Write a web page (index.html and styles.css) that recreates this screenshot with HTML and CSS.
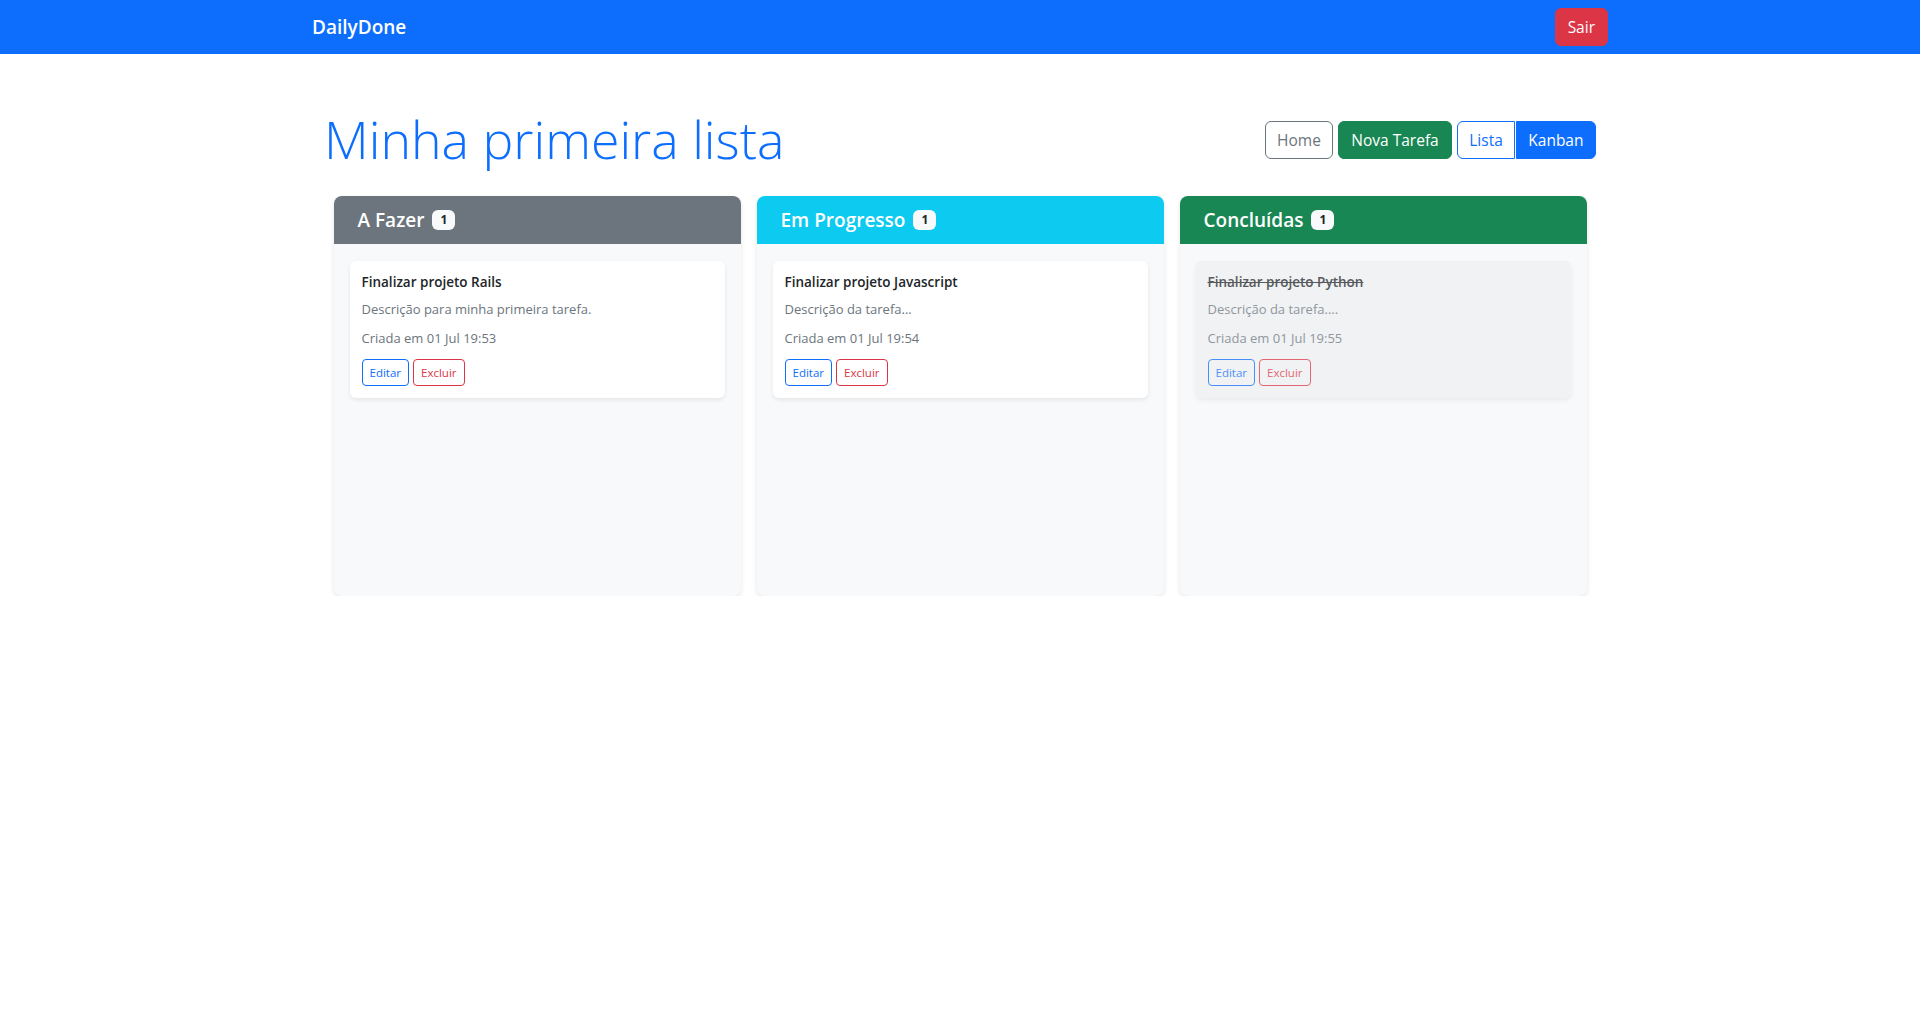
FILE: index.html
```html
<!DOCTYPE html>
<html lang="pt-BR">
<head>
<meta charset="utf-8">
<title>DailyDone</title>
<link rel="stylesheet" href="styles.css">
</head>
<body>
<nav class="navbar">
  <div class="nav-inner">
    <a class="brand" href="#">DailyDone</a>
    <button class="btn btn-danger">Sair</button>
  </div>
</nav>
<main class="page">
  <div class="page-header">
    <h1 class="page-title">Minha primeira lista</h1>
    <div class="actions">
      <a class="btn btn-outline-secondary" href="#">Home</a>
      <a class="btn btn-success" href="#">Nova Tarefa</a>
      <div class="btn-group">
        <a class="btn btn-outline-primary" href="#">Lista</a>
        <a class="btn btn-primary" href="#">Kanban</a>
      </div>
    </div>
  </div>
  <div class="board">
    <section class="column">
      <header class="column-header bg-secondary">
        <h5 class="column-title">A Fazer</h5><span class="badge">1</span>
      </header>
      <div class="column-body">
        <article class="task">
          <h6 class="task-title">Finalizar projeto Rails</h6>
          <p class="task-text">Descrição para minha primeira tarefa.</p>
          <p class="task-text task-date">Criada em 01 Jul 19:53</p>
          <div class="task-actions">
            <a class="btn-xs btn-xs-primary" href="#">Editar</a>
            <a class="btn-xs btn-xs-danger" href="#">Excluir</a>
          </div>
        </article>
      </div>
    </section>
    <section class="column">
      <header class="column-header bg-info">
        <h5 class="column-title">Em Progresso</h5><span class="badge">1</span>
      </header>
      <div class="column-body">
        <article class="task">
          <h6 class="task-title">Finalizar projeto Javascript</h6>
          <p class="task-text">Descrição da tarefa...</p>
          <p class="task-text task-date">Criada em 01 Jul 19:54</p>
          <div class="task-actions">
            <a class="btn-xs btn-xs-primary" href="#">Editar</a>
            <a class="btn-xs btn-xs-danger" href="#">Excluir</a>
          </div>
        </article>
      </div>
    </section>
    <section class="column">
      <header class="column-header bg-success">
        <h5 class="column-title">Concluídas</h5><span class="badge">1</span>
      </header>
      <div class="column-body">
        <article class="task task-done">
          <h6 class="task-title">Finalizar projeto Python</h6>
          <p class="task-text">Descrição da tarefa....</p>
          <p class="task-text task-date">Criada em 01 Jul 19:55</p>
          <div class="task-actions">
            <a class="btn-xs btn-xs-primary" href="#">Editar</a>
            <a class="btn-xs btn-xs-danger" href="#">Excluir</a>
          </div>
        </article>
      </div>
    </section>
  </div>
</main>
</body>
</html>
```

FILE: styles.css
```css
* { box-sizing: border-box; }

body {
  margin: 0;
  font-family: "Open Sans", "Noto Sans", sans-serif;
  font-size: 16px;
  line-height: 1.5;
  color: #212529;
  background: #fff;
}

a { text-decoration: none; }

.navbar {
  background: #0d6efd;
}

.nav-inner {
  max-width: 1296px;
  margin: 0 auto;
  padding: 8px 0;
  display: flex;
  align-items: center;
  justify-content: space-between;
}

.brand {
  color: #fff;
  font-size: 19px;
  font-weight: 600;
  line-height: 30px;
}

.btn {
  display: inline-block;
  font-family: inherit;
  font-size: 15.5px;
  line-height: 24px;
  padding: 6px 11px;
  border: 1px solid transparent;
  border-radius: 6px;
  cursor: pointer;
  background: transparent;
}

.btn-danger { background: #dc3545; border-color: #dc3545; color: #fff; padding: 6px 12px; }
.btn-success { background: #198754; border-color: #198754; color: #fff; padding: 6px 12.5px; }
.btn-primary { background: #0d6efd; border-color: #0d6efd; color: #fff; padding: 6px 11.5px; }
.btn-outline-secondary { border-color: #6c757d; color: #6c757d; }
.btn-outline-primary { border-color: #0d6efd; color: #0d6efd; }

.page {
  max-width: 1272px;
  margin: 0 auto;
  padding-top: 52px;
}

.page-header {
  display: flex;
  align-items: center;
  justify-content: space-between;
  margin-bottom: 23px;
}

.page-title {
  margin: 0;
  font-size: 51.8px;
  font-weight: 300;
  line-height: 67px;
  color: #0d6efd;
}

.actions {
  display: flex;
  align-items: center;
  gap: 5px;
}

.btn-group { display: flex; }
.btn-group .btn:first-child { border-top-right-radius: 0; border-bottom-right-radius: 0; }
.btn-group .btn:last-child { border-top-left-radius: 0; border-bottom-left-radius: 0; margin-left: 1px; }

.board {
  display: grid;
  grid-template-columns: repeat(3, 1fr);
  gap: 16px;
  padding: 0 9.5px;
}

.column {
  background: #f8f9fa;
  border-radius: 8px;
  min-height: 400px;
  overflow: hidden;
  box-shadow: 0 2px 5px rgba(0, 0, 0, 0.1);
}

.column-header {
  display: flex;
  align-items: center;
  gap: 8px;
  padding: 12px 24px;
  color: #fff;
}

.bg-secondary { background: #6c757d; }
.bg-info { background: #0dcaf0; }
.bg-success { background: #198754; }

.column-title {
  margin: 0;
  font-size: 19px;
  font-weight: 600;
  line-height: 24px;
}

.badge {
  display: inline-block;
  background: #f8f9fa;
  color: #212529;
  font-size: 12px;
  font-weight: 700;
  line-height: 12px;
  padding: 4px 8px;
  border-radius: 6px;
}

.column-body {
  padding: 17px 16px 16px;
}

.task {
  background: #fff;
  border-radius: 6px;
  padding: 12px;
  box-shadow: 0 2px 4px rgba(0, 0, 0, 0.08);
}

.task-title {
  margin: 0 0 8px;
  font-size: 13.5px;
  font-weight: 600;
  line-height: 18px;
  color: #212529;
}

.task-text {
  margin: 0 0 8px;
  font-size: 13px;
  line-height: 21px;
  color: #6c757d;
}

.task-text.task-date { margin-bottom: 10px; }

.task-actions {
  display: flex;
  gap: 4px;
}

.btn-xs {
  display: inline-block;
  font-size: 11.5px;
  line-height: 17px;
  padding: 4px 7px;
  border: 1px solid;
  border-radius: 4px;
  background: transparent;
}

.btn-xs-primary { color: #0d6efd; border-color: #0d6efd; }
.btn-xs-danger { color: #dc3545; border-color: #dc3545; }

.task-done {
  background: #eef0f2;
  opacity: 0.75;
}

.task-done .task-title { text-decoration: line-through; }
```
